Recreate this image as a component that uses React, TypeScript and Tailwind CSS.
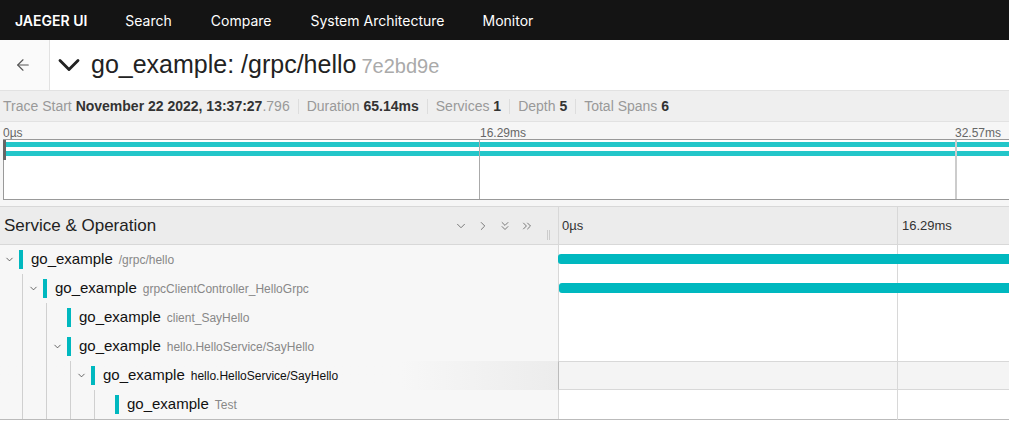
import { ChevronDown, ChevronRight, ChevronsDown, ChevronsRight, ArrowLeft } from 'lucide-react';

const SANS = { fontFamily: '"Liberation Sans", Arial, Helvetica, sans-serif' };

interface Span {
  depth: number;
  op: string;
  hasChildren: boolean;
  hovered?: boolean;
  bar?: number;
}

const SPANS: Span[] = [
  { depth: 0, op: '/grpc/hello', hasChildren: true, bar: 558 },
  { depth: 1, op: 'grpcClientController_HelloGrpc', hasChildren: true, bar: 559 },
  { depth: 2, op: 'client_SayHello', hasChildren: false },
  { depth: 2, op: 'hello.HelloService/SayHello', hasChildren: true },
  { depth: 3, op: 'hello.HelloService/SayHello', hasChildren: true, hovered: true },
  { depth: 4, op: 'Test', hasChildren: false },
];

function SpanRow({ span }: { span: Span }) {
  // one guide line per ancestor level
  const guides: number[] = [];
  for (let d = 0; d < span.depth; d++) guides.push(d);

  return (
    <div className="flex h-[29px]">
      <div
        className={`relative flex w-[558px] shrink-0 items-center ${
          span.hovered ? 'bg-gradient-to-r from-[#f7f7f7] from-[72%] to-[#ececec]' : 'bg-[#f7f7f7]'
        }`}
      >
        {guides.map((d) => (
          <span
            key={d}
            className="absolute top-0 bottom-0 w-px bg-[#d0d0d0]"
            style={{ left: 22 + d * 24 }}
          />
        ))}
        <div className="flex h-full items-center" style={{ paddingLeft: span.depth * 24 }}>
          <div className="flex w-[19px] items-center justify-center pl-1 text-[#333]">
            {span.hasChildren && <ChevronDown size={11} strokeWidth={1.6} className="ml-[-4px]" />}
          </div>
          <span className="h-[19px] w-[4px] bg-[#00b8bf]" />
          <span className="ml-2 text-[15px] text-[#111]">go_example</span>
          <span className={`ml-[6px] text-[12px] ${span.hovered ? 'text-[#111]' : 'text-[#888]'}`}>
            {span.op}
          </span>
        </div>
      </div>
      <div
        className={`relative flex-1 border-l ${
          span.hovered ? 'border-y border-[#d8d8d8] border-l-[#bbb] bg-[#f4f4f4]' : 'border-[#d8d8d8] bg-white'
        }`}
      >
        <span className="absolute top-[-1px] bottom-[-1px] left-[338px] w-px bg-[#d8d8d8]" />
        {span.bar !== undefined && (
          <span
            className="absolute top-[9px] h-[10px] rounded-[3px] bg-[#00b8bf]"
            style={{ left: span.bar - 559, right: -20 }}
          />
        )}
      </div>
    </div>
  );
}

function Sep() {
  return <span className="mx-[8px] h-[15px] w-px bg-[#ddd]" />;
}

export default function App() {
  return (
    <div className="h-[431px] w-[1009px] overflow-hidden bg-white" style={SANS}>
      {/* top nav */}
      <div
        className="flex h-[40px] items-center bg-[#141414] text-[14px] text-white"
        style={{ fontFamily: 'Inter, "Liberation Sans", sans-serif' }}
      >
        <span className="ml-[15px] font-semibold">JAEGER UI</span>
        <span className="ml-[38px]">Search</span>
        <span className="ml-[39px]">Compare</span>
        <span className="ml-[39px]">System Architecture</span>
        <span className="ml-[38px]">Monitor</span>
      </div>

      {/* title */}
      <div className="flex h-[51px] items-stretch border-b border-[#e2e2e2]">
        <div className="flex w-[50px] items-center justify-center border-r border-[#e2e2e2] bg-[#fafafa] pr-[3px] text-[#555]">
          <ArrowLeft size={18} strokeWidth={1.5} />
        </div>
        <div className="flex items-center pl-[1px]">
          <ChevronDown size={36} strokeWidth={1.9} className="text-[#222]" />
          <span className="ml-[4px] text-[25px] text-[#222]">go_example: /grpc/hello</span>
          <span className="ml-[5px] mt-[2px] text-[20px] text-[#aaa]">7e2bd9e</span>
        </div>
      </div>

      {/* summary */}
      <div className="flex h-[30px] items-center bg-[#efefef] pl-[3px] text-[14px] text-[#999]">
        <span>
          Trace Start <b className="text-[#333]">November 22 2022, 13:37:27</b>
          <span>.796</span>
        </span>
        <Sep />
        <span>
          Duration <b className="text-[#333]">65.14ms</b>
        </span>
        <Sep />
        <span>
          Services <b className="text-[#333]">1</b>
        </span>
        <Sep />
        <span>
          Depth <b className="text-[#333]">5</b>
        </span>
        <Sep />
        <span>
          Total Spans <b className="text-[#333]">6</b>
        </span>
      </div>

      {/* minimap */}
      <div className="h-[85px] border-t border-[#e2e2e2] bg-[#f6f6f6] pl-[3px] pt-[2px]">
        <div className="relative h-[15px] text-[12px] text-[#666]">
          <span className="absolute left-0 top-0">0µs</span>
          <span className="absolute left-[477px] top-0">16.29ms</span>
          <span className="absolute left-[952px] top-0">32.57ms</span>
        </div>
        <div className="relative h-[61px] border-y border-l border-[#999] bg-white">
          <span className="absolute left-0 right-0 top-[2px] h-[5px] bg-[#23c6c9]" />
          <span className="absolute left-0 right-0 top-[11px] h-[5px] bg-[#23c6c9]" />
          <span className="absolute left-[-1px] top-0 h-[20px] w-[3px] bg-[#666]" />
          <span className="absolute top-0 bottom-0 left-[475px] w-px bg-[#aaa]" />
          <span className="absolute top-0 bottom-0 left-[951px] w-[2px] bg-[#ccc]" />
        </div>
      </div>

      {/* table header */}
      <div className="flex h-[39px] border-y border-[#d8d8d8] bg-[#ececec]">
        <div className="relative flex w-[558px] shrink-0 items-center pl-[4px]">
          <span className="text-[17px] text-[#222]">Service &amp; Operation</span>
          <div className="ml-auto mr-[24px] flex items-center gap-[8px] text-[#777]">
            <ChevronDown size={14} strokeWidth={1.7} />
            <ChevronRight size={14} strokeWidth={1.7} />
            <ChevronsDown size={14} strokeWidth={1.7} />
            <ChevronsRight size={14} strokeWidth={1.7} />
          </div>
          <span className="absolute right-[8px] bottom-[4px] h-[10px] w-[3px] border-x border-[#ccc]" />
        </div>
        <div className="relative flex flex-1 items-center border-l border-[#d8d8d8] text-[13px] text-[#333]">
          <span className="ml-[3px]">0µs</span>
          <span className="absolute left-[338px] top-0 bottom-0 w-px bg-[#d8d8d8]" />
          <span className="absolute left-[343px]">16.29ms</span>
        </div>
      </div>

      {/* rows */}
      <div className="border-b border-[#bbb]">
        {SPANS.map((s, i) => (
          <SpanRow key={i} span={s} />
        ))}
      </div>
    </div>
  );
}
